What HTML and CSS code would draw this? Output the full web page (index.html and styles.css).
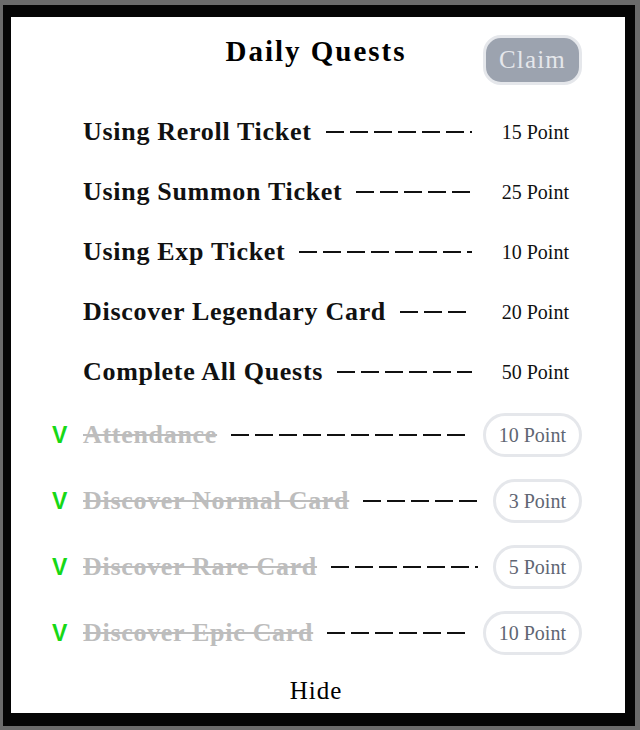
FILE: index.html
```html
<!DOCTYPE html>
<html lang="en">
<head>
<meta charset="UTF-8">
<meta name="viewport" content="width=device-width, initial-scale=1.0">
<title>Daily Quests</title>
<link rel="stylesheet" href="styles.css">
</head>
<body>
<div class="quest-modal">
    <div class="quest-header">
        <h1 class="quest-title">Daily Quests</h1>
        <button class="claim-button">Claim</button>
    </div>

    <ul class="quest-list">
        <li class="quest">
            <span class="check"></span>
            <span class="label">Using Reroll Ticket</span>
            <span class="dash"></span>
            <span class="points">15 Point</span>
        </li>
        <li class="quest">
            <span class="check"></span>
            <span class="label">Using Summon Ticket</span>
            <span class="dash"></span>
            <span class="points">25 Point</span>
        </li>
        <li class="quest">
            <span class="check"></span>
            <span class="label">Using Exp Ticket</span>
            <span class="dash"></span>
            <span class="points">10 Point</span>
        </li>
        <li class="quest">
            <span class="check"></span>
            <span class="label">Discover Legendary Card</span>
            <span class="dash"></span>
            <span class="points">20 Point</span>
        </li>
        <li class="quest">
            <span class="check"></span>
            <span class="label">Complete All Quests</span>
            <span class="dash"></span>
            <span class="points">50 Point</span>
        </li>
        <li class="quest done">
            <span class="check">V</span>
            <span class="label">Attendance</span>
            <span class="dash"></span>
            <span class="points">10 Point</span>
        </li>
        <li class="quest done">
            <span class="check">V</span>
            <span class="label">Discover Normal Card</span>
            <span class="dash"></span>
            <span class="points">3 Point</span>
        </li>
        <li class="quest done">
            <span class="check">V</span>
            <span class="label">Discover Rare Card</span>
            <span class="dash"></span>
            <span class="points">5 Point</span>
        </li>
        <li class="quest done">
            <span class="check">V</span>
            <span class="label">Discover Epic Card</span>
            <span class="dash"></span>
            <span class="points">10 Point</span>
        </li>
    </ul>

    <div class="hide-link">Hide</div>
</div>
</body>
</html>
```

FILE: styles.css
```css
body {
    margin: 0;
    padding: 0;
    background-color: #6b6b6b;
    font-family: "Liberation Serif", "Times New Roman", serif;
    color: #111;
}

.quest-modal {
    margin: 5px 5px 4px 3px;
    border-style: solid;
    border-color: #050505;
    border-width: 12px 10px 13px 8px;
    background-color: #fff;
    padding: 18px 43px 7px 39px;
}

/* header: title centred, claim button at the right */
.quest-header {
    display: grid;
    grid-template-columns: 1fr auto 1fr;
    align-items: start;
    height: 50px;
}

.quest-title {
    grid-column: 2;
    margin: 0;
    font-size: 29px;
    line-height: 32px;
    letter-spacing: 2px;
    font-weight: bold;
    color: #000;
}

.claim-button {
    grid-column: 3;
    justify-self: end;
    height: 50px;
    padding: 0 13px;
    background-color: #9ca3af;
    border: 3px solid #e5e7eb;
    border-radius: 18px;
    color: #e5e7eb;
    font-family: inherit;
    font-size: 25px;
    line-height: 44px;
    letter-spacing: 1.2px;
    cursor: pointer;
}

.quest-list {
    list-style: none;
    margin: 17px 0 0 0;
    padding: 0;
}

.quest {
    display: flex;
    align-items: center;
    padding: 11px 0;
}

.check {
    flex: none;
    width: 31px;
    padding-left: 2px;
    font-family: "Liberation Sans", Arial, sans-serif;
    font-size: 23px;
    font-weight: bold;
    color: #16d816;
}

.label {
    font-size: 26px;
    line-height: 38px;
    letter-spacing: 0.7px;
    font-weight: bold;
    white-space: nowrap;
}

.dash {
    flex: 1;
    height: 2px;
    margin: 0 15px 0 14px;
    background: repeating-linear-gradient(to right, #111 0 18px, transparent 18px 24px);
}

.points {
    font-size: 20px;
    line-height: 38px;
    padding: 0 13px 0 15px;
    white-space: nowrap;
}

.quest.done .label {
    color: #bdbdbd;
    text-decoration: line-through;
    text-decoration-thickness: 2px;
}

.quest.done .points {
    padding: 0 13px;
    border: 3px solid #e5e7eb;
    border-radius: 22px;
    color: #5f6673;
}

.hide-link {
    margin-top: 10px;
    text-align: center;
    font-size: 25px;
    line-height: 30px;
    letter-spacing: 1px;
    color: #000;
    cursor: pointer;
}
```
